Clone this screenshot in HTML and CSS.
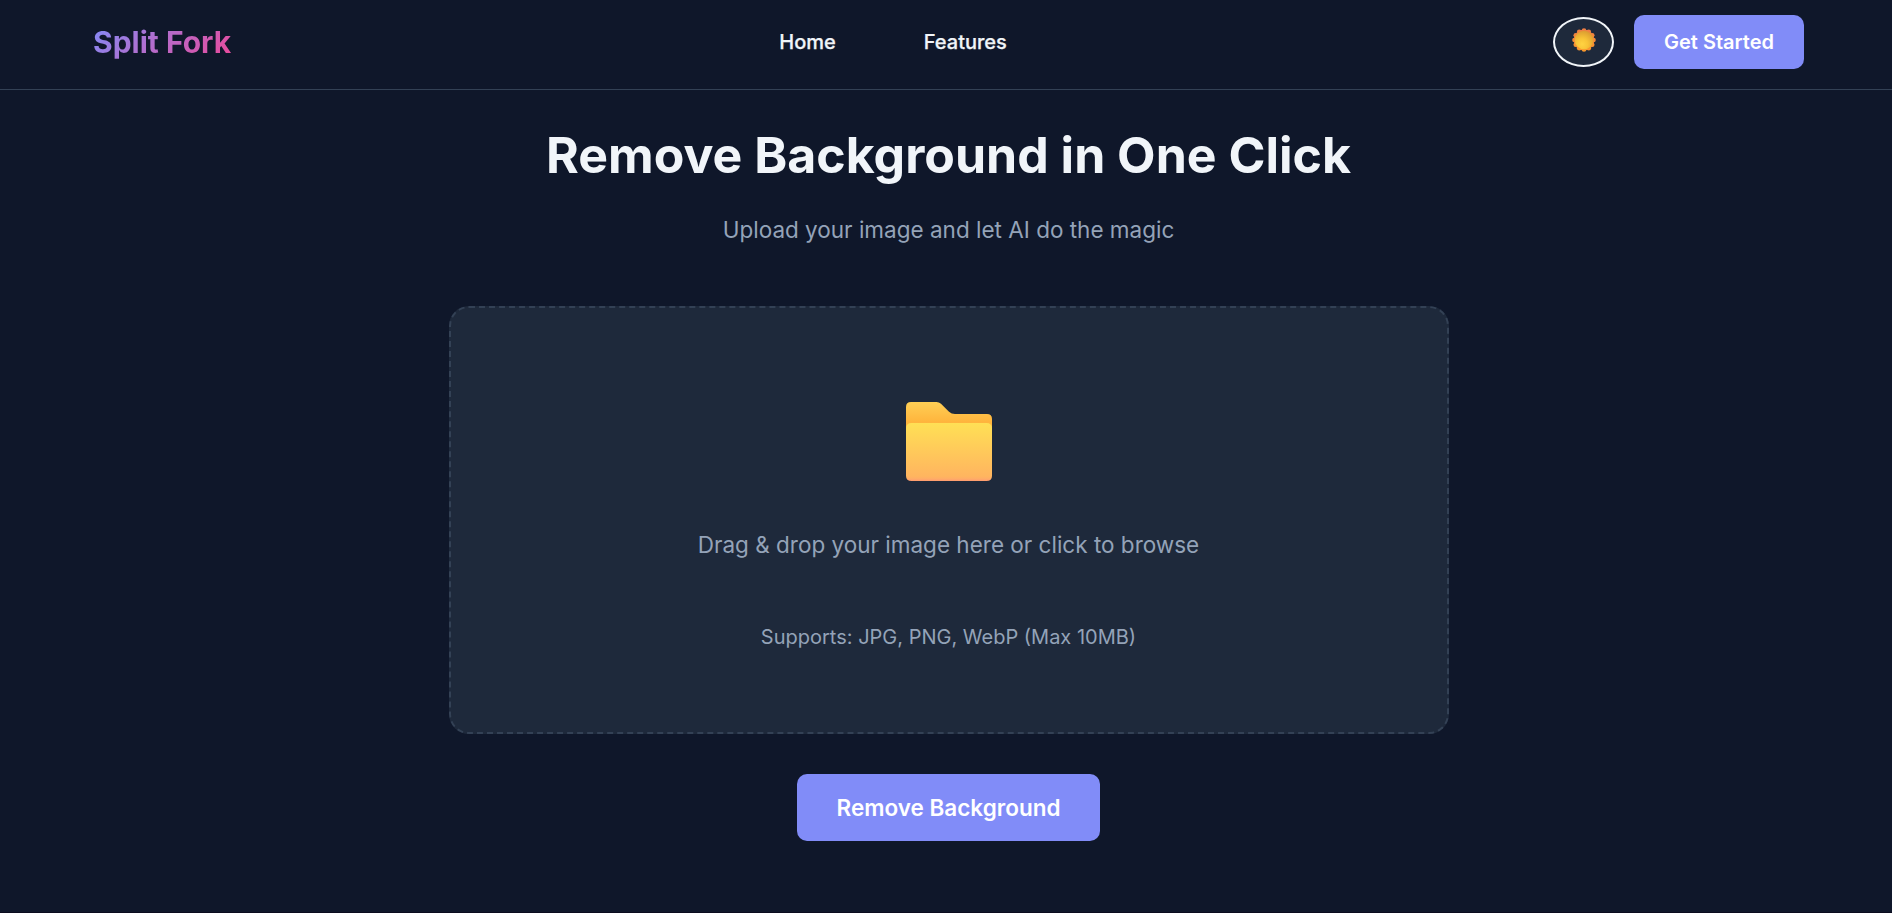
FILE: index.html
```html
<!DOCTYPE html>
<html lang="en">
<head>
<meta charset="utf-8">
<title>Split Fork</title>
<link rel="stylesheet" href="styles.css">
</head>
<body>
<header class="header">
  <a class="logo">Split Fork</a>
  <nav class="nav"><a class="nav-link">Home</a><a class="nav-link">Features</a></nav>
  <div class="actions">
    <button class="theme-toggle" aria-label="Toggle theme">
      <svg class="sun" viewBox="0 0 24 24">
        <defs>
          <radialGradient id="sunDisc" cx=".4" cy=".72" r=".75"><stop offset="0" stop-color="#ffd342"/><stop offset=".4" stop-color="#f9c437"/><stop offset="1" stop-color="#d99a31"/></radialGradient>
          <linearGradient id="sunRays" gradientUnits="userSpaceOnUse" x1="0" y1="0" x2="0" y2="24"><stop offset="0" stop-color="#ef7d45"/><stop offset="1" stop-color="#fb9a2a"/></linearGradient>
        </defs>
        <g fill="url(#sunRays)">
          <circle cx="12" cy="12" r="10.400"/>
          <circle cx="12" cy="2.500" r="2.300"/><circle cx="16.750" cy="3.770" r="2.300"/>
          <circle cx="20.230" cy="7.250" r="2.300"/><circle cx="21.500" cy="12" r="2.300"/>
          <circle cx="20.230" cy="16.750" r="2.300"/><circle cx="16.750" cy="20.230" r="2.300"/>
          <circle cx="12" cy="21.500" r="2.300"/><circle cx="7.250" cy="20.230" r="2.300"/>
          <circle cx="3.770" cy="16.750" r="2.300"/><circle cx="2.500" cy="12" r="2.300"/>
          <circle cx="3.770" cy="7.250" r="2.300"/><circle cx="7.250" cy="3.770" r="2.300"/>
        </g>
        <circle cx="12" cy="12" r="9.3" fill="url(#sunDisc)"/>
      </svg>
    </button>
    <button class="btn btn-small">Get Started</button>
  </div>
</header>
<main class="main">
  <h1 class="title">Remove Background in One Click</h1>
  <p class="subtitle">Upload your image and let AI do the magic</p>
  <section class="dropzone">
    <svg class="folder" viewBox="0 0 86 80">
      <defs>
        <linearGradient id="folderBack" x1="0" y1="0" x2="0" y2="1"><stop offset="0" stop-color="#ffcf55"/><stop offset=".28" stop-color="#ffb53d"/><stop offset="1" stop-color="#ffb04a"/></linearGradient>
        <linearGradient id="folderFront" x1="0" y1="0" x2="0" y2="1"><stop offset="0" stop-color="#ffe055"/><stop offset=".92" stop-color="#ffb55f"/><stop offset=".96" stop-color="#ffad66"/><stop offset="1" stop-color="#ff9a70"/></linearGradient>
      </defs>
      <path fill="url(#folderBack)" d="M5 0H30.500Q33 0 35 1.800L43 9.700Q45.500 12 49 12H81Q86 12 86 17V70H0V5Q0 0 5 0Z"/>
      <path fill="url(#folderFront)" d="M5.500 21H80.500Q86 21 86 26.500V74Q86 79 80.500 79H5.500Q0 79 0 74V26.500Q0 21 5.500 21Z"/>
    </svg>
    <p class="drop-text">Drag &amp; drop your image here or click to browse</p>
    <p class="drop-hint">Supports: JPG, PNG, WebP (Max 10MB)</p>
  </section>
  <button class="btn btn-large">Remove Background</button>
</main>
</body>
</html>
```
FILE: styles.css
```css
* {
  box-sizing: border-box;
}

html {
  background: #0f172a;
}

body {
  margin: 0;
  height: 913px;
  overflow: hidden;
  border-bottom: 1px solid #0a0b1e;
  background: #0f172a;
  color: #f1f5f9;
  font-family: Inter, "Liberation Sans", sans-serif;
}

button {
  font-family: inherit;
}

.header {
  display: flex;
  justify-content: space-between;
  align-items: center;
  height: 90px;
  padding: 0 88px 6px 93px;
  border-bottom: 1px solid #334155;
}

.logo {
  font-size: 30px;
  font-weight: 700;
  line-height: 40px;
  color: transparent;
  background: linear-gradient(135deg, #818cf8, #ec4899);
  -webkit-background-clip: text;
  background-clip: text;
}

.nav {
  display: flex;
  gap: 88px;
  padding-left: 2px;
}

.nav-link {
  font-size: 20px;
  font-weight: 500;
  -webkit-text-stroke: 0.25px #f1f5f9;
}

.actions {
  display: flex;
  align-items: center;
  gap: 20px;
}

.theme-toggle {
  display: flex;
  align-items: center;
  justify-content: center;
  width: 61px;
  height: 50px;
  padding: 0 0 3px 1px;
  border: 2px solid #f1f5f9;
  border-radius: 50%;
  background: #1e293b;
}

.sun {
  width: 24px;
  height: 24px;
}

.btn {
  border: 0;
  border-radius: 10px;
  background: #818cf8;
  color: #fff;
  font-weight: 600;
}

.btn-small {
  width: 170px;
  height: 54px;
  padding: 0;
  font-size: 20px;
}

.btn-large {
  width: 303px;
  height: 67px;
  margin-top: 40px;
  padding: 0;
  font-size: 22.5px;
}

.main {
  display: flex;
  flex-direction: column;
  align-items: center;
  padding-left: 5px;
}

.title {
  margin: 30px 0 0;
  font-size: 50px;
  font-weight: 700;
  line-height: 70px;
}

.subtitle {
  margin: 22px 0 0;
  font-size: 22.5px;
  line-height: 36px;
  color: #94a3b8;
}

.dropzone {
  display: flex;
  flex-direction: column;
  align-items: center;
  width: 1000px;
  height: 428px;
  margin-top: 58px;
  padding-top: 94px;
  border: 2px dashed #334155;
  border-radius: 20px;
  background: #1e293b;
}

.folder {
  width: 86px;
  height: 80px;
}

.drop-text {
  margin: 45px 0 0;
  font-size: 22.5px;
  line-height: 36px;
  color: #94a3b8;
}

.drop-hint {
  margin: 58px 0 0;
  font-size: 20px;
  line-height: 32px;
  color: #94a3b8;
}
```
